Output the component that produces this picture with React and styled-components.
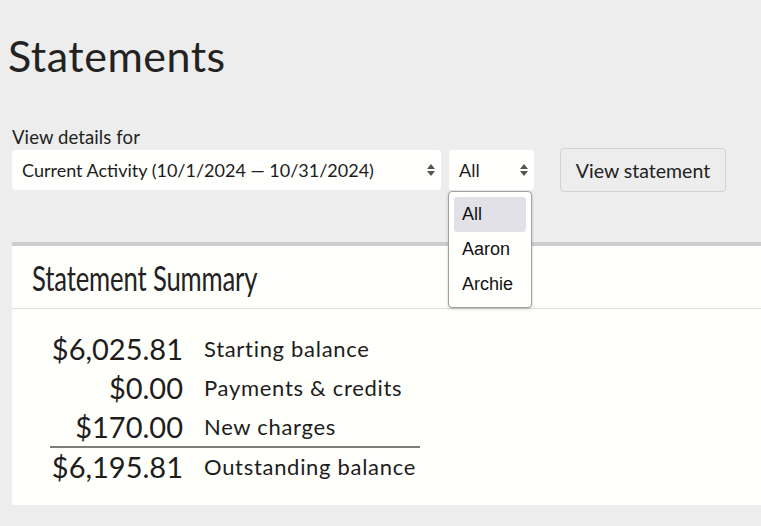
import React from "react";
import styled, { createGlobalStyle } from "styled-components";

const Global = createGlobalStyle`
  html, body { margin: 0; padding: 0; background: #ededed; }
  body { font-family: Lato, "Open Sans", sans-serif; color: #222; overflow: hidden; }
`;

const Page = styled.div`
  padding: 0 0 0 8px;
  width: 753px;
  height: 526px;
  overflow: hidden;
`;

const Title = styled.h1`
  margin: 0;
  padding-top: 30px;
  font-family: Lato, sans-serif;
  font-weight: 400;
  font-size: 43px;
  line-height: 52px;
  letter-spacing: 0.5px;
  color: #222;
`;

const Form = styled.div`
  margin: 44px 0 0 4px;
`;

const Label = styled.div`
  font-size: 18.5px;
  line-height: 22px;
  letter-spacing: 0.1px;
  color: #222;
  margin-bottom: 0;
`;

const Controls = styled.div`
  display: flex;
  align-items: center;
  gap: 8px;
`;

const SelectBox = styled.div`
  position: relative;
  box-sizing: border-box;
  width: ${(p) => p.$w}px;
  height: 40px;
  background: #fffffd;
  border-radius: 3px;
  display: flex;
  align-items: center;
  padding-left: 10px;
  font-size: 18px;
  color: #1c1c1c;
`;

const Arrows = styled.svg`
  position: absolute;
  right: 5px;
  top: 13px;
`;

const Button = styled.button`
  margin-left: 18px;
  box-sizing: border-box;
  width: 166px;
  height: 44px;
  background: #ededed;
  border: 1px solid #d2d2d2;
  border-radius: 4px;
  font-family: Lato, sans-serif;
  font-size: 19.5px;
  color: #222;
  padding: 0;
`;

const Menu = styled.div`
  position: absolute;
  left: -1px;
  top: 41px;
  width: 84px;
  box-sizing: border-box;
  background: #fffffd;
  border: 1px solid #a0a0a0;
  border-radius: 4px;
  box-shadow: 0 1px 3px rgba(0, 0, 0, 0.2);
  padding: 5px;
  z-index: 10;
`;

const MenuItem = styled.div`
  height: 35px;
  line-height: 35px;
  padding-left: 8px;
  border-radius: 3px;
  font-family: "Liberation Sans", Arial, sans-serif;
  font-size: 18px;
  color: #111;
  background: ${(p) => (p.$active ? "#e1e1e7" : "transparent")};
`;

const Card = styled.div`
  margin: 50px 0 0 4px;
  background: #fffffc;
  border-top: 4px solid #cdcdcd;
  height: 259px;
`;

const CardHeader = styled.div`
  height: 62px;
  border-bottom: 1px solid #dedede;
  display: flex;
  align-items: center;
  padding-left: 20px;
`;

const HeaderText = styled.span`
  display: inline-block;
  font-family: Lato, sans-serif;
  font-weight: 400;
  font-size: 34px;
  letter-spacing: -0.2px;
  color: #222;
  transform: scaleX(0.755);
  transform-origin: left center;
  white-space: nowrap;
`;

const SummaryGrid = styled.div`
  margin: 20px 0 0 38px;
  width: 370px;
  display: grid;
  grid-template-columns: 133px 1fr;
  column-gap: 21px;
`;

const Amount = styled.div`
  text-align: right;
  font-size: 29px;
  line-height: 39px;
  color: #1d1d1d;
`;

const Desc = styled.div`
  font-size: 22px;
  line-height: 39px;
  letter-spacing: 0.7px;
  color: #1d1d1d;
`;

const Rule = styled.div`
  grid-column: 1 / -1;
  height: 2px;
  background: #7d7d7d;
  margin: 0 0 -1px;
`;

const ArrowIcon = () => (
  <Arrows width="10" height="14" viewBox="0 0 10 14">
    <path d="M5 1 L9 6 H1 Z M1 8 H9 L5 13 Z" fill="#555" />
  </Arrows>
);

const rows = [
  ["$6,025.81", "Starting balance"],
  ["$0.00", "Payments & credits"],
  ["$170.00", "New charges"],
];

export default function App() {
  return (
    <>
      <Global />
      <Page>
        <Title>Statements</Title>
        <Form>
          <Label>View details for</Label>
          <Controls>
            <SelectBox $w={429}>
              Current Activity (10/1/2024 — 10/31/2024)
              <ArrowIcon />
            </SelectBox>
            <SelectBox $w={85}>
              All
              <ArrowIcon />
              <Menu>
                <MenuItem $active>All</MenuItem>
                <MenuItem>Aaron</MenuItem>
                <MenuItem>Archie</MenuItem>
              </Menu>
            </SelectBox>
            <Button>View statement</Button>
          </Controls>
        </Form>
        <Card>
          <CardHeader>
            <HeaderText>Statement Summary</HeaderText>
          </CardHeader>
          <SummaryGrid>
            {rows.map(([a, d]) => (
              <React.Fragment key={d}>
                <Amount>{a}</Amount>
                <Desc>{d}</Desc>
              </React.Fragment>
            ))}
            <Rule />
            <Amount>$6,195.81</Amount>
            <Desc>Outstanding balance</Desc>
          </SummaryGrid>
        </Card>
      </Page>
    </>
  );
}
